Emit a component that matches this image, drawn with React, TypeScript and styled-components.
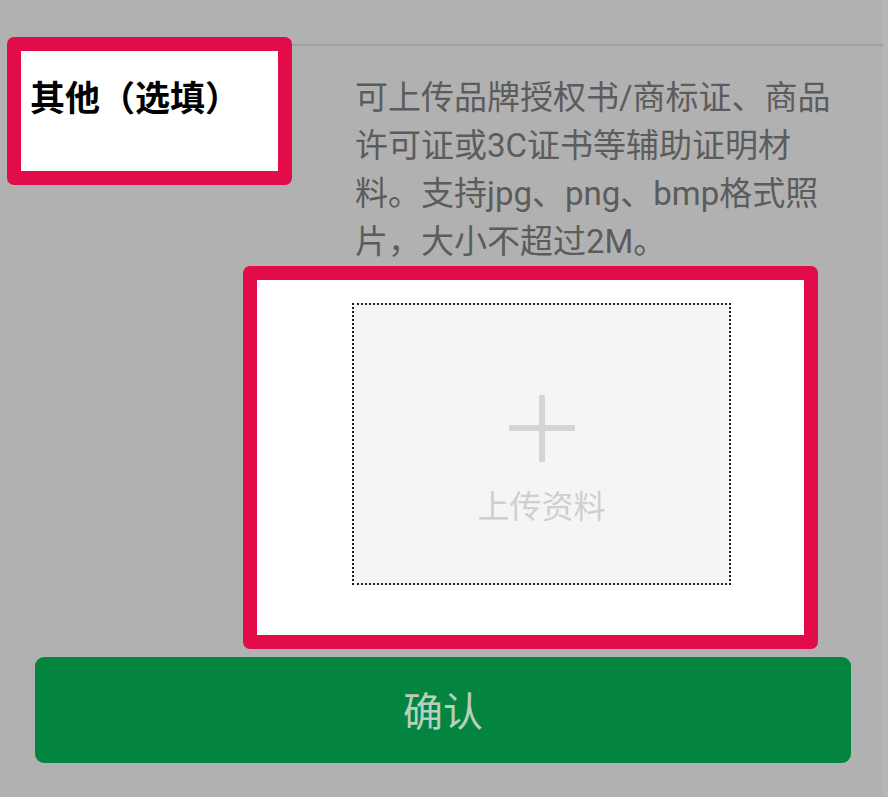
import React from "react";
import styled, { createGlobalStyle } from "styled-components";

const GlobalStyle = createGlobalStyle`
  html, body {
    margin: 0;
    padding: 0;
    background: #b1b1b1;
  }
  body {
    font-family: Roboto, "Noto Sans CJK SC", sans-serif;
  }
`;

const Page = styled.div`
  width: 888px;
  height: 797px;
  background: #b1b1b1;
  box-sizing: border-box;
  border-right: 5px solid #b6b6b6;
  overflow: hidden;
  display: flex;
  flex-direction: column;
`;

const TopRow = styled.div`
  display: flex;
  align-items: flex-start;
`;

const Highlight = styled.div`
  box-sizing: border-box;
  border: 14px solid #e20c4a;
  border-radius: 7px;
  background: #ffffff;
`;

const LabelBox = styled(Highlight)`
  margin: 37px 0 0 7px;
  width: 285px;
  height: 148px;
  padding: 24px 0 0 9px;
`;

const Title = styled.div`
  font-family: "Noto Sans CJK SC", sans-serif;
  font-weight: 700;
  font-size: 35px;
  line-height: 42px;
  color: #000;
  white-space: nowrap;
`;

const DescColumn = styled.div`
  flex: 1;
  margin-top: 44px;
  border-top: 2px solid #a0a0a0;
  padding: 28px 0 0 63px;
`;

const Desc = styled.div`
  font-size: 33px;
  line-height: 48px;
  color: #5c5c5c;
`;

const Line = styled.span`
  display: block;
  white-space: nowrap;
`;

const UploadRow = styled.div`
  display: flex;
  padding-left: 243px;
`;

const UploadBox = styled(Highlight)`
  width: 575px;
  height: 383px;
  padding: 23px 0 0 95px;
`;

const DropZone = styled.div`
  box-sizing: border-box;
  width: 379px;
  height: 282px;
  border: 2px dotted #1e1e1e;
  background: #f6f5f6;
  display: flex;
  flex-direction: column;
  align-items: center;
  padding-top: 90px;
`;

const PlusIcon = styled.svg`
  display: block;
  width: 66px;
  height: 67px;
`;

const UploadLabel = styled.div`
  margin-top: 23px;
  font-family: "Noto Sans CJK SC", sans-serif;
  font-size: 32px;
  line-height: 38px;
  color: #cfcfcf;
`;

const ConfirmButton = styled.button`
  margin: 8px 0 0 35px;
  width: 816px;
  height: 106px;
  border: none;
  border-radius: 9px;
  background: #03853f;
  color: #b7cfbc;
  font-family: "Noto Sans CJK SC", sans-serif;
  font-size: 40px;
  display: flex;
  align-items: center;
  justify-content: center;
  padding: 0 0 2px;
  cursor: pointer;
`;

export default function App() {
  return (
    <>
      <GlobalStyle />
      <Page>
        <TopRow>
          <LabelBox>
            <Title>其他（选填）</Title>
          </LabelBox>
          <DescColumn>
            <Desc>
              <Line>可上传品牌授权书/商标证、商品</Line>
              <Line>许可证或3C证书等辅助证明材</Line>
              <Line>料。支持jpg、png、bmp格式照</Line>
              <Line>片，大小不超过2M。</Line>
            </Desc>
          </DescColumn>
        </TopRow>
        <UploadRow>
          <UploadBox>
            <DropZone>
              <PlusIcon viewBox="0 0 66 67">
                <line x1="33" y1="2" x2="33" y2="65" stroke="#d5d5d5" strokeWidth="6" strokeLinecap="round" />
                <line x1="2" y1="33" x2="64" y2="33" stroke="#d5d5d5" strokeWidth="6" strokeLinecap="round" />
              </PlusIcon>
              <UploadLabel>上传资料</UploadLabel>
            </DropZone>
          </UploadBox>
        </UploadRow>
        <ConfirmButton>确认</ConfirmButton>
      </Page>
    </>
  );
}
